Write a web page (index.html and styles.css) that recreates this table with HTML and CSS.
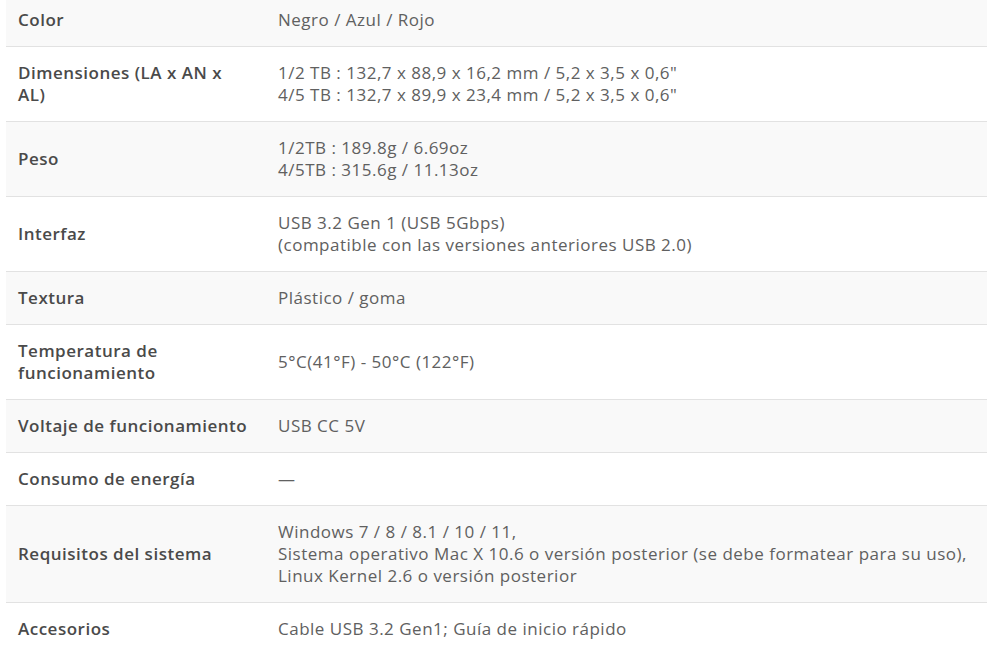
FILE: index.html
```html
<!DOCTYPE html>
<html lang="es">
<head>
<meta charset="utf-8">
<title>Especificaciones</title>
<link rel="stylesheet" href="styles.css">
</head>
<body>
<table class="spec">
  <colgroup><col class="col-label"><col class="col-value"></colgroup>
  <tbody>
    <tr><td class="label">Color</td><td class="value">Negro / Azul / Rojo</td></tr>
    <tr><td class="label">Dimensiones (LA x AN x AL)</td><td class="value">1/2 TB : 132,7 x 88,9 x 16,2 mm / 5,2 x 3,5 x 0,6"<br>4/5 TB : 132,7 x 89,9 x 23,4 mm / 5,2 x 3,5 x 0,6"</td></tr>
    <tr><td class="label">Peso</td><td class="value">1/2TB : 189.8g / 6.69oz<br>4/5TB : 315.6g / 11.13oz</td></tr>
    <tr><td class="label">Interfaz</td><td class="value">USB 3.2 Gen 1 (USB 5Gbps)<br>(compatible con las versiones anteriores USB 2.0)</td></tr>
    <tr><td class="label">Textura</td><td class="value">Plástico / goma</td></tr>
    <tr><td class="label">Temperatura de funcionamiento</td><td class="value">5°C(41°F) - 50°C (122°F)</td></tr>
    <tr><td class="label">Voltaje de funcionamiento</td><td class="value">USB CC 5V</td></tr>
    <tr><td class="label">Consumo de energía</td><td class="value">—</td></tr>
    <tr><td class="label">Requisitos del sistema</td><td class="value">Windows 7 / 8 / 8.1 / 10 / 11,<br>Sistema operativo Mac X 10.6 o versión posterior (se debe formatear para su uso),<br>Linux Kernel 2.6 o versión posterior</td></tr>
    <tr><td class="label">Accesorios</td><td class="value">Cable USB 3.2 Gen1; Guía de inicio rápido</td></tr>
  </tbody>
</table>
</body>
</html>
```
FILE: styles.css
```css
html, body {
  margin: 0;
  padding: 0;
  background: #ffffff;
}

body {
  font-family: "Open Sans", "Liberation Sans", sans-serif;
  font-size: 17px;
  letter-spacing: 0.5px;
  color: #5f5f5f;
  overflow: hidden;
}

.spec {
  width: calc(100% - 6px);
  margin: -6px 0 0 6px;
  border-collapse: collapse;
  table-layout: fixed;
}

.col-label {
  width: 260px;
}

.spec td {
  padding: 15px 12px;
  line-height: 22px;
  vertical-align: middle;
}

.spec td.label {
  padding-right: 16px;
  font-weight: 600;
  color: #4a4a4a;
}

.spec tr + tr td {
  border-top: 1px solid #e2e2e2;
}

.spec tr:nth-child(odd) {
  background: #f9f9f9;
}

.value {
  color: #606060;
}
```
